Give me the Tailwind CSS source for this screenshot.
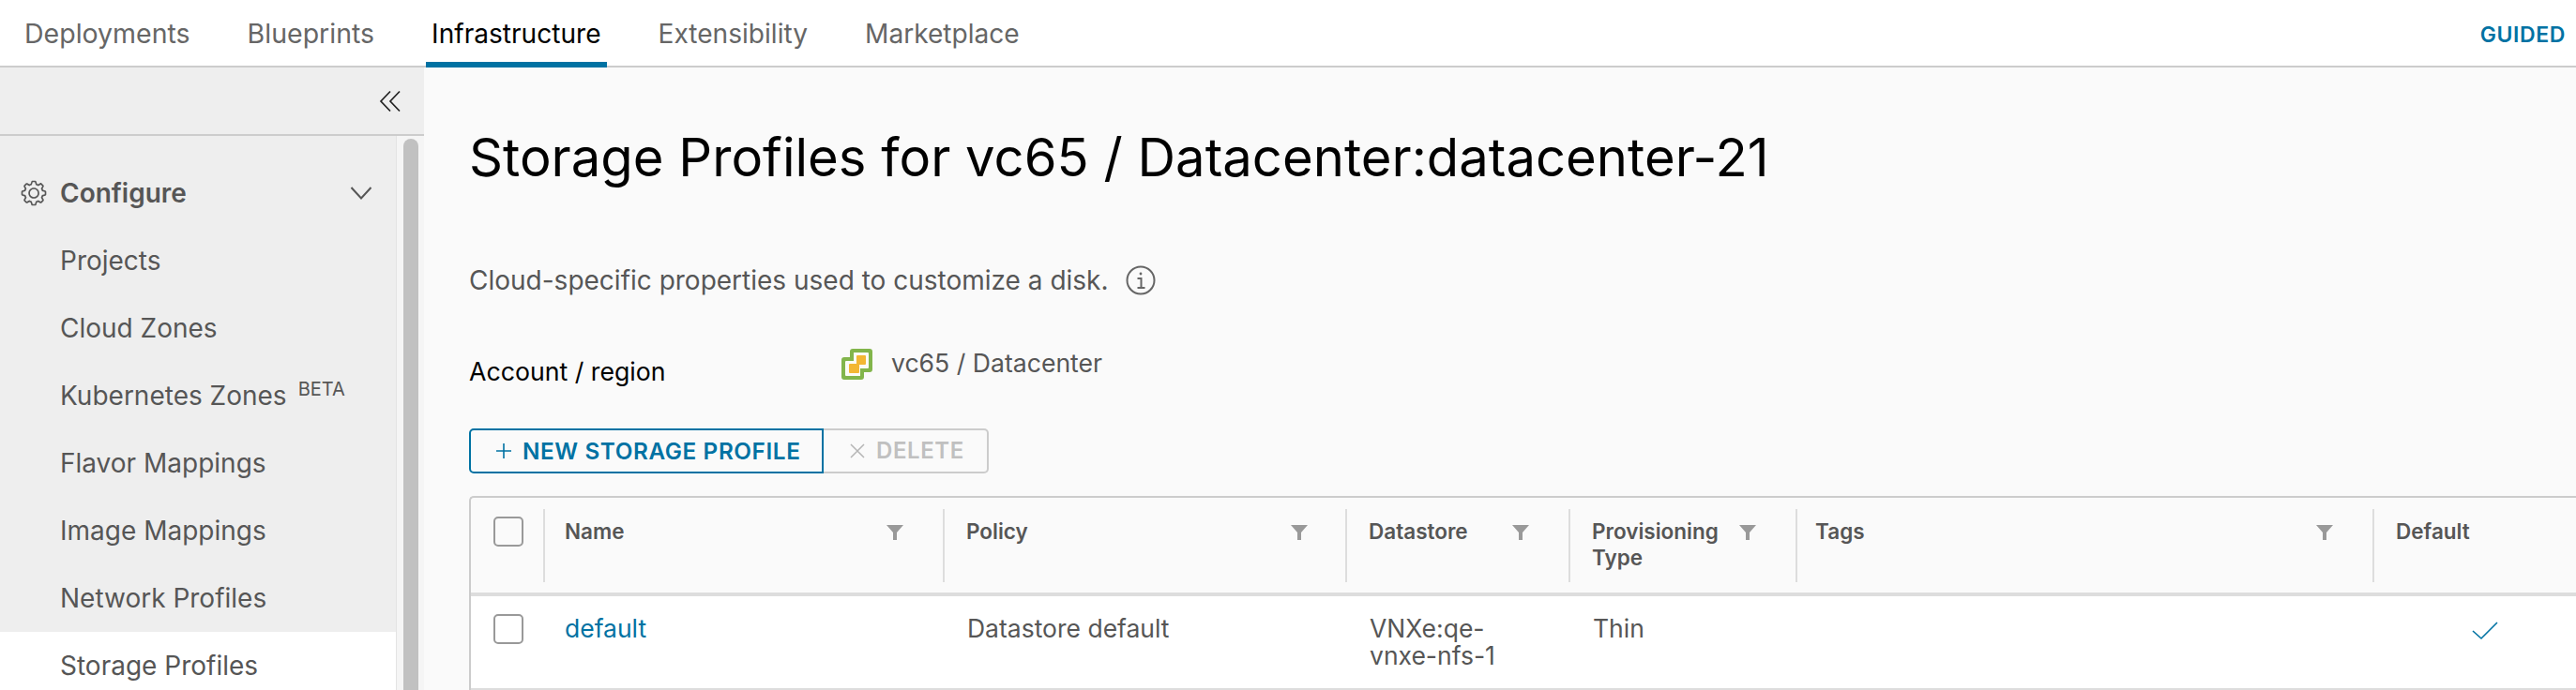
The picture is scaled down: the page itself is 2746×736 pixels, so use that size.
<!DOCTYPE html>
<html lang="en">
<head>
  <meta name="viewport" content="width=device-width, initial-scale=1.0">
  <script src="https://cdn.jsdelivr.net/npm/@tailwindcss/browser@4"></script>
</head>
<body class="h-[736px] overflow-hidden bg-[#fafafa] font-['Inter',sans-serif] text-[#565656]">

  <!-- Top tabs -->
  <header class="flex h-[72px] items-stretch justify-between border-b-2 border-[#cccccc] bg-white pl-[20px] pr-[11px]">
    <nav class="flex gap-[49px] text-[28.5px]">
      <a class="flex items-center px-[6px] pt-[2px] text-[#666666]">Deployments</a>
      <a class="flex items-center px-[6px] pt-[2px] text-[#666666]">Blueprints</a>
      <a class="-mb-[2px] flex items-center border-b-[6px] border-[#0072a3] px-[6px] pt-[6px] text-[28.1px] text-[#000000]">Infrastructure</a>
      <a class="flex items-center px-[6px] pt-[2px] text-[28.1px] text-[#666666]">Extensibility</a>
      <a class="flex items-center px-[6px] pt-[2px] text-[28.1px] text-[#666666]">Marketplace</a>
    </nav>
    <a class="flex items-center pt-[5px] text-[23px] font-semibold tracking-[0.6px] text-[#0072a3]">GUIDED</a>
  </header>

  <div class="flex h-[664px]">
    <!-- Sidebar -->
    <aside class="flex w-[452px] shrink-0 flex-col bg-[#eeeeee]">
      <div class="flex h-[73px] shrink-0 items-center justify-end border-b-2 border-[#cccccc] pr-[24px]">
        <svg class="h-[24px] w-[24px]" viewBox="0 0 24 24" fill="none" stroke="#222222" stroke-width="1.7"><path d="M12 1.5 L2 12 L12 22.5 M22 1.5 L12 12 L22 22.5"/></svg>
      </div>
      <div class="flex min-h-0 flex-1">
        <div class="w-[422px] shrink-0 overflow-hidden pt-[25px] text-[28px]">
          <div class="flex h-[72px] items-center pl-[21px] pr-[25px]">
            <svg class="h-[30px] w-[30px] shrink-0" viewBox="0 0 36 36" fill="#565656"><path d="M18.1,11c-3.9,0-7,3.1-7,7s3.1,7,7,7c3.9,0,7-3.1,7-7S22,11,18.1,11z M18.1,23c-2.8,0-5-2.2-5-5s2.2-5,5-5c2.8,0,5,2.2,5,5S20.9,23,18.1,23z"/><path d="M32.8,14.7L30,13.8l-0.6-1.5l1.4-2.6c0.3-0.6,0.2-1.4-0.3-1.9l-2.4-2.4c-0.5-0.5-1.3-0.6-1.9-0.3l-2.6,1.4l-1.5-0.6l-0.9-2.8C21,2.5,20.4,2,19.7,2h-3.4c-0.7,0-1.3,0.5-1.4,1.2L14,6c-0.6,0.1-1.1,0.3-1.6,0.6L9.8,5.2C9.2,4.9,8.4,5,7.9,5.5L5.5,7.9C5,8.4,4.9,9.2,5.2,9.8l1.3,2.5c-0.2,0.5-0.4,1.1-0.6,1.6l-2.8,0.9C2.5,15,2,15.6,2,16.3v3.4c0,0.7,0.5,1.3,1.2,1.5L6,22.1l0.6,1.5l-1.4,2.6c-0.3,0.6-0.2,1.4,0.3,1.9l2.4,2.4c0.5,0.5,1.3,0.6,1.9,0.3l2.6-1.4l1.5,0.6l0.9,2.9c0.2,0.6,0.8,1.1,1.5,1.1h3.4c0.7,0,1.3-0.5,1.5-1.1l0.9-2.9l1.5-0.6l2.6,1.4c0.6,0.3,1.4,0.2,1.9-0.3l2.4-2.4c0.5-0.5,0.6-1.3,0.3-1.9l-1.4-2.6l0.6-1.5l2.9-0.9c0.6-0.2,1.1-0.8,1.1-1.5v-3.4C34,15.5,33.5,14.9,32.8,14.7z M32,19.4l-3.6,1.1L28.3,21c-0.3,0.7-0.6,1.4-0.9,2.1l-0.3,0.5l1.8,3.3l-2,2l-3.3-1.8l-0.5,0.3c-0.7,0.4-1.4,0.7-2.1,0.9l-0.5,0.1L19.4,32h-2.8l-1.1-3.6L15,28.3c-0.7-0.3-1.4-0.6-2.1-0.9l-0.5-0.3l-3.3,1.8l-2-2l1.8-3.3l-0.3-0.5c-0.4-0.7-0.7-1.4-0.9-2.1l-0.1-0.5L4,19.4v-2.8l3.4-1l0.2-0.5c0.2-0.8,0.5-1.5,0.9-2.2l0.3-0.5L7.1,9.1l2-2l3.2,1.8l0.5-0.3c0.7-0.4,1.4-0.7,2.2-0.9l0.5-0.2L16.6,4h2.8l1.1,3.5L21,7.7c0.7,0.2,1.4,0.5,2.1,0.9l0.5,0.3l3.3-1.8l2,2l-1.8,3.3l0.3,0.5c0.4,0.7,0.7,1.4,0.9,2.1l0.1,0.5l3.6,1.1V19.4z"/></svg>
            <span class="ml-[13px] flex-1 font-semibold">Configure</span>
            <svg class="h-[16px] w-[24px]" viewBox="0 0 24 16" fill="none" stroke="#565656" stroke-width="2"><path d="M1.5 2 L12 13.5 L22.5 2"/></svg>
          </div>
          <div class="flex h-[72px] items-center pl-[64px]">Projects</div>
          <div class="flex h-[72px] items-center pl-[64px]">Cloud Zones</div>
          <div class="flex h-[72px] items-center pl-[64px]">Kubernetes Zones<span class="mb-[14px] ml-[12px] text-[20px]">BETA</span></div>
          <div class="flex h-[72px] items-center pl-[64px]">Flavor Mappings</div>
          <div class="flex h-[72px] items-center pl-[64px]">Image Mappings</div>
          <div class="flex h-[72px] items-center pl-[64px]">Network Profiles</div>
          <div class="flex h-[72px] items-center bg-white pl-[64px]">Storage Profiles</div>
        </div>
        <div class="flex-1 border-l border-[#e4e4e4] bg-[#f5f5f5] pl-[7px] pt-[3px]">
          <div class="h-full w-[16px] rounded-t-full bg-[#c1c1c1]"></div>
        </div>
      </div>
    </aside>

    <!-- Main content -->
    <main class="min-w-0 flex-1 pl-[48px]">
      <h1 class="pt-[62px] text-[56.2px] leading-[68px] text-[#000000]">Storage Profiles for vc65 / Datacenter:datacenter-21</h1>

      <div class="mt-[76px] flex items-center text-[28px]">
        <span>Cloud-specific properties used to customize a disk.</span>
        <svg class="ml-[18px] h-[32px] w-[32px]" viewBox="0 0 32 32" fill="none" stroke="#666666" stroke-width="2"><circle cx="16" cy="16" r="14.5"/><path d="M12.5 14 H16.5 V24 M12.5 24 H20.5"/><circle cx="16" cy="9" r="1.4" fill="#666666" stroke="none"/></svg>
      </div>

      <div class="mt-[48px] flex h-[89px]">
        <div class="w-[397px] pt-[8px] text-[26.7px] text-[#000000]">Account / region</div>
        <div class="flex items-start">
          <svg class="mt-[4px] h-[33px] w-[33px]" viewBox="0 0 33 33">
            <path d="M12 0 H30 Q33 0 33 3 V22 Q33 25 30 25 H24 V30 Q24 33 21 33 H3 Q0 33 0 30 V12 Q0 9 3 9 H9 V3 Q9 0 12 0 Z" fill="#82b54b"/>
            <path d="M13 4 H28 Q29 4 29 5 V20 Q29 21 28 21 H20 V29 H5 Q4 29 4 28 V14 Q4 13 5 13 H13 Z" fill="#fbfbf5"/>
            <rect x="8" y="16" width="11" height="10" rx="1" fill="#f3b733"/>
            <rect x="16" y="7" width="10" height="10" rx="1" fill="#f3b733"/>
          </svg>
          <span class="ml-[20px] text-[26.6px]">vc65 / Datacenter</span>
        </div>
      </div>

      <!-- Toolbar -->
      <div class="flex h-[48px]">
        <button class="flex w-[378px] items-center rounded-l-[5px] border-2 border-[#0072a3] pl-[25px] text-[24.3px] font-semibold tracking-[0.6px] text-[#0072a3]">
          <svg class="mr-[10px] h-[20px] w-[20px]" viewBox="0 0 20 20" fill="none" stroke="#0072a3" stroke-width="1.6"><path d="M10 2 V18 M2 10 H18"/></svg>
          NEW STORAGE PROFILE
        </button>
        <button class="flex w-[176px] items-center rounded-r-[5px] border-2 border-l-0 border-[#cccccc] pl-[28px] text-[24px] font-semibold tracking-[0.6px] text-[#c0c0c0]">
          <svg class="mr-[12px] h-[16px] w-[16px]" viewBox="0 0 16 16" fill="none" stroke="#b5b5b5" stroke-width="1.5"><path d="M1 1 L15 15 M15 1 L1 15"/></svg>
          DELETE
        </button>
      </div>

      <!-- Table -->
      <div class="mt-[24px] rounded-tl-[5px] border-l-2 border-t-2 border-[#cccccc]">
        <div class="grid h-[105px] grid-cols-[77px_426px_429px_238px_242px_615px_1fr] border-b-4 border-[#dddddd] pt-[12px] text-[22.5px] font-semibold leading-[28px]">
          <div class="pl-[24px] pt-[8px]"><div class="h-[32px] w-[32px] rounded-[5px] border-2 border-[#999999]"></div></div>
          <div class="flex h-[78px] items-start justify-between border-l-2 border-[#dddddd] pl-[21px] pr-[42px] pt-[10px]">
            <span>Name</span>
            <svg class="mt-[7px] h-[16px] w-[18px]" viewBox="0 0 18 16" fill="#999999"><path d="M0 0 H18 L11 8 V16 H7 V8 Z"/></svg>
          </div>
          <div class="flex h-[78px] items-start justify-between border-l-2 border-[#dddddd] pl-[23px] pr-[40px] pt-[10px]">
            <span>Policy</span>
            <svg class="mt-[7px] h-[16px] w-[18px]" viewBox="0 0 18 16" fill="#999999"><path d="M0 0 H18 L11 8 V16 H7 V8 Z"/></svg>
          </div>
          <div class="flex h-[78px] items-start justify-between border-l-2 border-[#dddddd] pl-[23px] pr-[42px] pt-[10px]">
            <span>Datastore</span>
            <svg class="mt-[7px] h-[16px] w-[18px]" viewBox="0 0 18 16" fill="#999999"><path d="M0 0 H18 L11 8 V16 H7 V8 Z"/></svg>
          </div>
          <div class="flex h-[78px] items-start justify-between border-l-2 border-[#dddddd] pl-[23px] pr-[42px] pt-[10px]">
            <span>Provisioning<br>Type</span>
            <svg class="mt-[7px] h-[16px] w-[18px]" viewBox="0 0 18 16" fill="#999999"><path d="M0 0 H18 L11 8 V16 H7 V8 Z"/></svg>
          </div>
          <div class="flex h-[78px] items-start justify-between border-l-2 border-[#dddddd] pl-[19px] pr-[42px] pt-[10px]">
            <span>Tags</span>
            <svg class="mt-[7px] h-[16px] w-[18px]" viewBox="0 0 18 16" fill="#999999"><path d="M0 0 H18 L11 8 V16 H7 V8 Z"/></svg>
          </div>
          <div class="h-[78px] border-l-2 border-[#dddddd] pl-[23px] pt-[10px]">Default</div>
        </div>
        <div class="grid h-[100px] grid-cols-[77px_426px_429px_238px_242px_615px_1fr] border-b-2 border-[#dddddd] bg-white pt-[20px] text-[26.5px] leading-[29px]">
          <div class="-mt-[1px] pl-[24px]"><div class="h-[32px] w-[32px] rounded-[5px] border-2 border-[#999999]"></div></div>
          <div class="pl-[23px] text-[#0072a3]">default</div>
          <div class="pl-[26px]">Datastore default</div>
          <div class="pl-[26px]">VNXe:qe-<br>vnxe-nfs-1</div>
          <div class="pl-[26px]">Thin</div>
          <div></div>
          <div class="pl-[106px] pt-[7px]">
            <svg class="h-[20px] w-[28px]" viewBox="0 0 28 20" fill="none" stroke="#0072a3" stroke-width="1.6"><path d="M1 10 L10 18 L27 1"/></svg>
          </div>
        </div>
      </div>
    </main>
  </div>
</body>
</html>
